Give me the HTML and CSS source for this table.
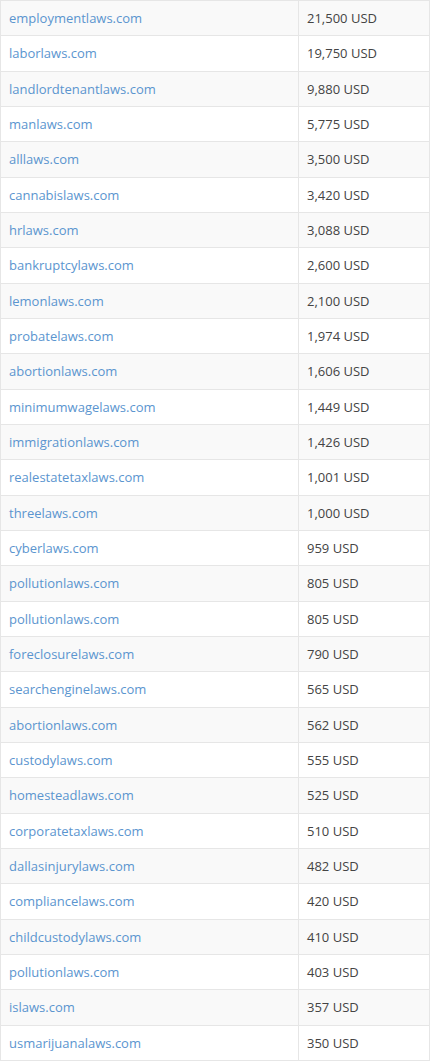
FILE: index.html
```html
<!DOCTYPE html>
<html>
<head>
<meta charset="utf-8">
<link rel="stylesheet" href="styles.css">
</head>
<body>
<table class="prices">
<tbody>
<tr><td><a href="#">employmentlaws.com</a></td><td>21,500 USD</td></tr>
<tr><td><a href="#">laborlaws.com</a></td><td>19,750 USD</td></tr>
<tr><td><a href="#">landlordtenantlaws.com</a></td><td>9,880 USD</td></tr>
<tr><td><a href="#">manlaws.com</a></td><td>5,775 USD</td></tr>
<tr><td><a href="#">alllaws.com</a></td><td>3,500 USD</td></tr>
<tr><td><a href="#">cannabislaws.com</a></td><td>3,420 USD</td></tr>
<tr><td><a href="#">hrlaws.com</a></td><td>3,088 USD</td></tr>
<tr><td><a href="#">bankruptcylaws.com</a></td><td>2,600 USD</td></tr>
<tr><td><a href="#">lemonlaws.com</a></td><td>2,100 USD</td></tr>
<tr><td><a href="#">probatelaws.com</a></td><td>1,974 USD</td></tr>
<tr><td><a href="#">abortionlaws.com</a></td><td>1,606 USD</td></tr>
<tr><td><a href="#">minimumwagelaws.com</a></td><td>1,449 USD</td></tr>
<tr><td><a href="#">immigrationlaws.com</a></td><td>1,426 USD</td></tr>
<tr><td><a href="#">realestatetaxlaws.com</a></td><td>1,001 USD</td></tr>
<tr><td><a href="#">threelaws.com</a></td><td>1,000 USD</td></tr>
<tr><td><a href="#">cyberlaws.com</a></td><td>959 USD</td></tr>
<tr><td><a href="#">pollutionlaws.com</a></td><td>805 USD</td></tr>
<tr><td><a href="#">pollutionlaws.com</a></td><td>805 USD</td></tr>
<tr><td><a href="#">foreclosurelaws.com</a></td><td>790 USD</td></tr>
<tr><td><a href="#">searchenginelaws.com</a></td><td>565 USD</td></tr>
<tr><td><a href="#">abortionlaws.com</a></td><td>562 USD</td></tr>
<tr><td><a href="#">custodylaws.com</a></td><td>555 USD</td></tr>
<tr><td><a href="#">homesteadlaws.com</a></td><td>525 USD</td></tr>
<tr><td><a href="#">corporatetaxlaws.com</a></td><td>510 USD</td></tr>
<tr><td><a href="#">dallasinjurylaws.com</a></td><td>482 USD</td></tr>
<tr><td><a href="#">compliancelaws.com</a></td><td>420 USD</td></tr>
<tr><td><a href="#">childcustodylaws.com</a></td><td>410 USD</td></tr>
<tr><td><a href="#">pollutionlaws.com</a></td><td>403 USD</td></tr>
<tr><td><a href="#">islaws.com</a></td><td>357 USD</td></tr>
<tr><td><a href="#">usmarijuanalaws.com</a></td><td>350 USD</td></tr>
</tbody>
</table>
</body>
</html>
```
FILE: styles.css
```css
html, body {
  margin: 0;
  padding: 0;
  background: #ffffff;
}
body {
  font-family: "Open Sans", "Liberation Sans", sans-serif;
  font-size: 13px;
  color: #444444;
}
.prices {
  width: 430px;
  border-collapse: collapse;
  table-layout: fixed;
}
.prices tr {
  height: 35.33px;
}
.prices tr:nth-child(odd) {
  background: #f9f9f9;
}
.prices td {
  border: 1px solid #e6e6e6;
  padding: 0 8px;
  vertical-align: middle;
  line-height: 18px;
}
.prices td:first-child {
  width: 281px;
}
.prices a {
  color: #5b95cf;
  text-decoration: none;
}
```
